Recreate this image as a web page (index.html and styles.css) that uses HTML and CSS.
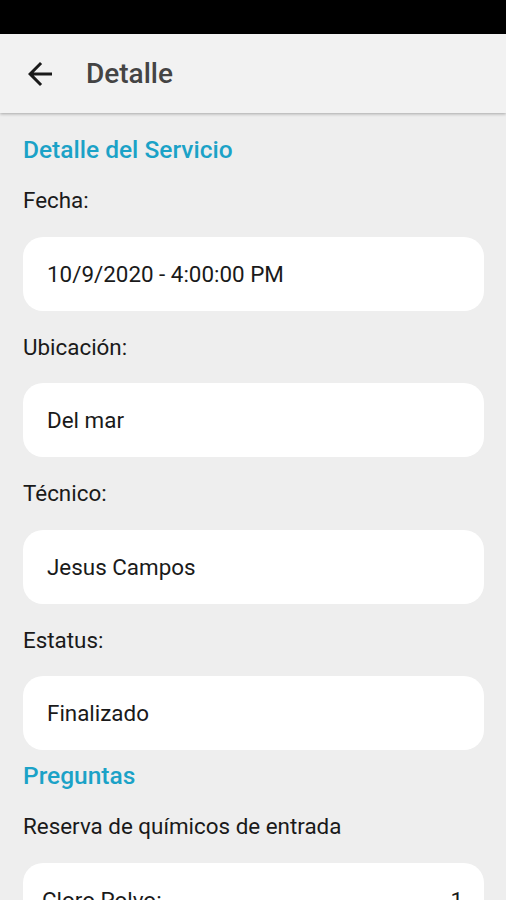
FILE: index.html
```html
<!DOCTYPE html>
<html lang="es">
  <head>
    <meta charset="UTF-8" />
    <title>Detalle</title>
    <link rel="stylesheet" href="styles.css">
  </head>
  <body>
    <div class="status-bar"></div>

    <div class="app-bar">
      <button class="back-btn" aria-label="Volver">
        <svg width="36" height="36" viewBox="0 0 24 24">
          <path d="M20 11H7.83l5.59-5.59L12 4l-8 8 8 8 1.41-1.41L7.83 13H20v-2z" fill="#1a1a1a" />
        </svg>
      </button>
      <h1>Detalle</h1>
    </div>

    <div class="content">
      <h2 class="section-title">Detalle del Servicio</h2>

      <div class="label">Fecha:</div>
      <div class="card">10/9/2020 - 4:00:00 PM</div>

      <div class="label">Ubicación:</div>
      <div class="card">Del mar</div>

      <div class="label">Técnico:</div>
      <div class="card">Jesus Campos</div>

      <div class="label">Estatus:</div>
      <div class="card">Finalizado</div>

      <h2 class="section-title questions">Preguntas</h2>

      <div class="label">Reserva de químicos de entrada</div>
      <div class="card list-card">
        <div class="row">
          <span>Cloro Polvo:</span>
          <span>1</span>
        </div>
      </div>
    </div>
  </body>
</html>
```

FILE: styles.css
```css
* {
  font-family: Roboto, "Noto Sans", sans-serif;
  box-sizing: border-box;
}

body {
  margin: 0;
  background-color: #eeeeee;
  color: #1a1a1a;
  overflow: hidden;
}

.status-bar {
  height: 34px;
  background-color: #000;
}

.app-bar {
  height: 79px;
  display: flex;
  align-items: center;
  background-color: #f2f2f2;
  box-shadow: 0 1px 3px rgba(0, 0, 0, 0.3);
  position: relative;
}

.back-btn {
  width: 36px;
  height: 36px;
  margin-left: 22px;
  padding: 0;
  border: none;
  background: none;
  display: flex;
}

.app-bar h1 {
  margin: 0 0 0 28px;
  font-size: 28px;
  font-weight: 500;
  color: #444;
}

.content {
  padding: 0 22px 0 23px;
}

.section-title {
  margin: 23px 0 0;
  font-size: 24.5px;
  line-height: 28px;
  font-weight: 500;
  color: #1ba2c7;
}

.section-title.questions {
  margin-top: 12px;
}

.label {
  padding: 23px 0 23.5px;
  font-size: 22.4px;
  line-height: 26px;
}

.card {
  height: 74px;
  padding: 0 24px;
  background: white;
  border-radius: 20px;
  font-size: 22.4px;
  line-height: 74px;
}

.list-card {
  padding: 0 21px 0 19px;
  height: 120px;
}

.row {
  display: flex;
  justify-content: space-between;
}
```
